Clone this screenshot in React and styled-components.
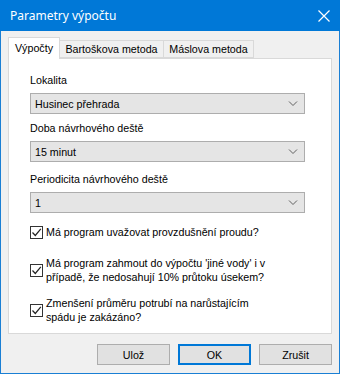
import React from 'react'
import styled, { createGlobalStyle } from 'styled-components'

const Global = createGlobalStyle`
body{
  margin:0;
  background:#ffffff;
  font-family:"Liberation Sans", Arial, sans-serif;
}
`

function Chevron() {
  return (
    <svg width="10" height="6" viewBox="0 0 10 6">
      <path d="M1 0.5 L5 4.5 L9 0.5" fill="none" stroke="#606060" strokeWidth="1" />
    </svg>
  )
}

function Check() {
  return (
    <svg width="11" height="11" viewBox="0 0 11 11">
      <path d="M1.5 5.5 L4.3 8.5 L9.8 1.8" fill="none" stroke="#222" strokeWidth="1.2" />
    </svg>
  )
}

function CloseIcon() {
  return (
    <svg width="12" height="12" viewBox="0 0 12 12">
      <path d="M0.5 0.5 L11.5 11.5 M11.5 0.5 L0.5 11.5" stroke="#fff" strokeWidth="1.2" />
    </svg>
  )
}

function App() {
  return (
    <>
      <Global />
      <Window>
        <TitleBar>
          <span>Parametry výpočtu</span>
          <CloseBtn><CloseIcon /></CloseBtn>
        </TitleBar>
        <Body>
          <Tabs>
            <Tab active w={52}>Výpočty</Tab>
            <Tab w={105}>Bartoškova metoda</Tab>
            <Tab w={91}>Máslova metoda</Tab>
          </Tabs>
          <Panel>
            <Label>Lokalita</Label>
            <Select>
              <span>Husinec přehrada</span>
              <Chevron />
            </Select>
            <Label top={8}>Doba návrhového deště</Label>
            <Select>
              <span>15 minut</span>
              <Chevron />
            </Select>
            <Label top={11}>Periodicita návrhového deště</Label>
            <Select>
              <span>1</span>
              <Chevron />
            </Select>

            <CheckRow top={12}>
              <Box><Check /></Box>
              <CheckText>Má program uvažovat provzdušnění proudu?</CheckText>
            </CheckRow>
            <CheckRow top={17}>
              <Box><Check /></Box>
              <CheckText>Má program zahmout do výpočtu 'jiné vody' i v<br />případě, že nedosahují 10% průtoku úsekem?</CheckText>
            </CheckRow>
            <CheckRow top={12}>
              <Box><Check /></Box>
              <CheckText>Zmenšení průměru potrubí na narůstajícím<br />spádu je zakázáno?</CheckText>
            </CheckRow>
          </Panel>
          <Buttons>
            <Button>Ulož</Button>
            <Button primary>OK</Button>
            <Button>Zrušit</Button>
          </Buttons>
        </Body>
      </Window>
    </>
  )
}

export default App

const Window = styled.div`
width:340px;
height:374px;
box-sizing:border-box;
border:1px solid #1a7fd4;
border-top:none;
background:#f0f0f0;
display:flex;
flex-direction:column;
`
const TitleBar = styled.div`
height:31px;
margin:0 -1px;
background:#0078d7;
color:#ffffff;
display:flex;
align-items:center;
justify-content:space-between;
padding:0 10px 0 10px;
font-family:"Noto Sans", "Liberation Sans", sans-serif;
font-size:12px;
span{
  margin-top:-1px;
}
`
const CloseBtn = styled.div`
width:12px;
height:12px;
display:flex;
`
const Body = styled.div`
flex:1;
padding:6px 7px 0 7px;
display:flex;
flex-direction:column;
`
const Tabs = styled.div`
display:flex;
align-items:flex-end;
height:21px;
position:relative;
z-index:1;
`
const Tab = styled.div`
box-sizing:border-box;
width:${p => p.w}px;
height:${p => p.active ? '22px' : '18px'};
background:${p => p.active ? '#ffffff' : '#f0f0f0'};
border:1px solid #d9d9d9;
border-bottom:${p => p.active ? 'none' : '1px solid #d9d9d9'};
margin-left:${p => p.active ? '0' : '-1px'};
margin-bottom:${p => p.active ? '-1px' : '0'};
font-size:10.7px;
color:#000;
display:flex;
align-items:center;
justify-content:center;
padding-bottom:${p => p.active ? '2px' : '0'};
white-space:nowrap;
`
const Panel = styled.div`
box-sizing:border-box;
width:324px;
height:276px;
background:#ffffff;
border:1px solid #d9d9d9;
padding:15px 0 0 21px;
display:flex;
flex-direction:column;
`
const Label = styled.div`
font-size:10.7px;
line-height:13px;
color:#000;
margin-top:${p => p.top || 0}px;
margin-bottom:6px;
`
const Select = styled.div`
box-sizing:border-box;
width:275px;
height:21px;
background:#e5e5e5;
border:1px solid #adadad;
display:flex;
align-items:center;
justify-content:space-between;
padding:0 6px 0 4px;
font-size:10.7px;
color:#000;
`
const CheckRow = styled.div`
display:flex;
align-items:center;
margin-top:${p => p.top || 0}px;
`
const Box = styled.div`
box-sizing:border-box;
width:13px;
height:13px;
border:1px solid #333;
background:#fff;
display:flex;
align-items:center;
justify-content:center;
`
const CheckText = styled.div`
font-size:10.7px;
line-height:14px;
color:#000;
margin-left:3px;
`
const Buttons = styled.div`
display:flex;
justify-content:flex-end;
gap:8px;
margin-top:10px;
`
const Button = styled.div`
box-sizing:border-box;
width:73px;
height:21px;
background:#e1e1e1;
border:${p => p.primary ? '2px solid #0078d7' : '1px solid #adadad'};
font-size:10.7px;
color:#000;
display:flex;
align-items:center;
justify-content:center;
`
